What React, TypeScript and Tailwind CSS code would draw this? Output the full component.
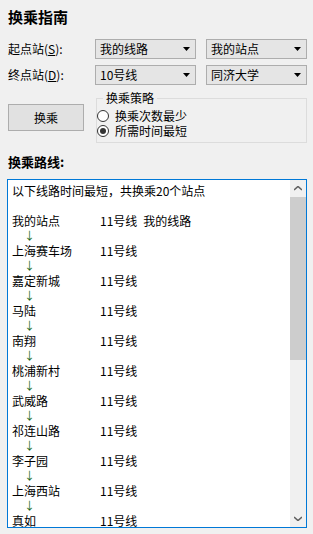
import React from 'react';

const FONT = '"Noto Sans CJK SC", "Noto Sans", sans-serif';

const stations = [
  { name: '我的站点', line: '11号线', extra: '我的线路' },
  { name: '上海赛车场', line: '11号线' },
  { name: '嘉定新城', line: '11号线' },
  { name: '马陆', line: '11号线' },
  { name: '南翔', line: '11号线' },
  { name: '桃浦新村', line: '11号线' },
  { name: '武威路', line: '11号线' },
  { name: '祁连山路', line: '11号线' },
  { name: '李子园', line: '11号线' },
  { name: '上海西站', line: '11号线' },
  { name: '真如', line: '11号线' },
];

const Combo: React.FC<{ value: string; className?: string }> = ({ value, className }) => (
  <div
    className={`flex h-[20px] w-[101px] items-center justify-between border border-[#adadad] bg-[#e5e5e5] pl-[4px] pr-[5px] text-[12px] leading-none text-black ${className ?? ''}`}
  >
    <span>{value}</span>
    <svg width="7" height="4" viewBox="0 0 7 4">
      <path d="M0 0h7L3.5 4z" fill="#000" />
    </svg>
  </div>
);

const Radio: React.FC<{ label: string; checked?: boolean }> = ({ label, checked }) => (
  <div className="flex h-[15px] items-center gap-[6px]">
    <span className="flex h-[12px] w-[12px] items-center justify-center rounded-full border border-[#333] bg-white">
      {checked && <span className="h-[6px] w-[6px] rounded-full bg-[#333]" />}
    </span>
    <span className="text-[12px] leading-none">{label}</span>
  </div>
);

export default function App() {
  return (
    <div className="h-[534px] w-[313px] overflow-hidden bg-[#f0f0f0] text-black" style={{ fontFamily: FONT }}>
      {/* Title */}
      <div className="px-2 pt-[7px] text-[15px] font-bold leading-[20px]">换乘指南</div>

      {/* Start */}
      <div className="mt-[12px] flex items-center pl-2">
        <span className="w-[87px] text-[12px] leading-none">
          起点站(<span className="underline">S</span>):
        </span>
        <Combo value="我的线路" />
        <Combo value="我的站点" className="ml-[10px]" />
      </div>

      {/* End */}
      <div className="mt-[6px] flex items-center pl-2">
        <span className="w-[87px] text-[12px] leading-none">
          终点站(<span className="underline">D</span>):
        </span>
        <Combo value="10号线" />
        <Combo value="同济大学" className="ml-[10px]" />
      </div>

      {/* Button + strategy */}
      <div className="mt-[13px] flex pl-2">
        <button className="mt-[6px] h-[27px] w-[76px] border border-[#adadad] bg-[#e1e1e1] text-[12px]">换乘</button>
        <div className="relative ml-[12px] h-[45px] w-[211px] border border-[#dcdcdc] pt-[9px]">
          <span className="absolute left-[6px] top-[-8px] bg-[#f0f0f0] px-[3px] text-[12px] leading-[14px]">换乘策略</span>
          <Radio label="换乘次数最少" />
          <Radio label="所需时间最短" checked />
        </div>
      </div>

      {/* Result label */}
      <div className="mt-[9px] px-2 text-[13px] font-bold leading-[20px]">换乘路线:</div>

      {/* Result box */}
      <div className="ml-[7px] mt-[7px] flex h-[349px] w-[300px] border border-[#0078d7] bg-white">
        <div className="flex-1 overflow-hidden pl-[4px] pt-[3px] text-[12px] leading-[15px]">
          <div className="h-[15px] whitespace-nowrap">以下线路时间最短，共换乘20个站点</div>
          <div className="h-[15px]" />
          {stations.map((s, i) => (
            <div key={s.name}>
              {i > 0 && (
                <div className="h-[15px] pl-[12px] text-[11px] leading-[15px] text-[#1a6b1a]">↓</div>
              )}
              <div className="flex h-[15px] whitespace-nowrap">
                <span className="w-[88px]">{s.name}</span>
                <span>{s.line}</span>
                {s.extra && <span className="ml-[6px]">{s.extra}</span>}
              </div>
            </div>
          ))}
        </div>
        <div className="flex w-[16px] flex-col bg-[#f0f0f0]">
          <div className="flex h-[17px] items-center justify-center">
            <svg width="8" height="5" viewBox="0 0 8 5">
              <path d="M0 4L4 0.5L8 4" stroke="#606060" strokeWidth="1.6" fill="none" />
            </svg>
          </div>
          <div className="h-[163px] bg-[#cdcdcd]" />
          <div className="flex-1" />
          <div className="flex h-[17px] items-center justify-center">
            <svg width="8" height="5" viewBox="0 0 8 5">
              <path d="M0 1L4 4.5L8 1" stroke="#606060" strokeWidth="1.6" fill="none" />
            </svg>
          </div>
        </div>
      </div>
    </div>
  );
}
